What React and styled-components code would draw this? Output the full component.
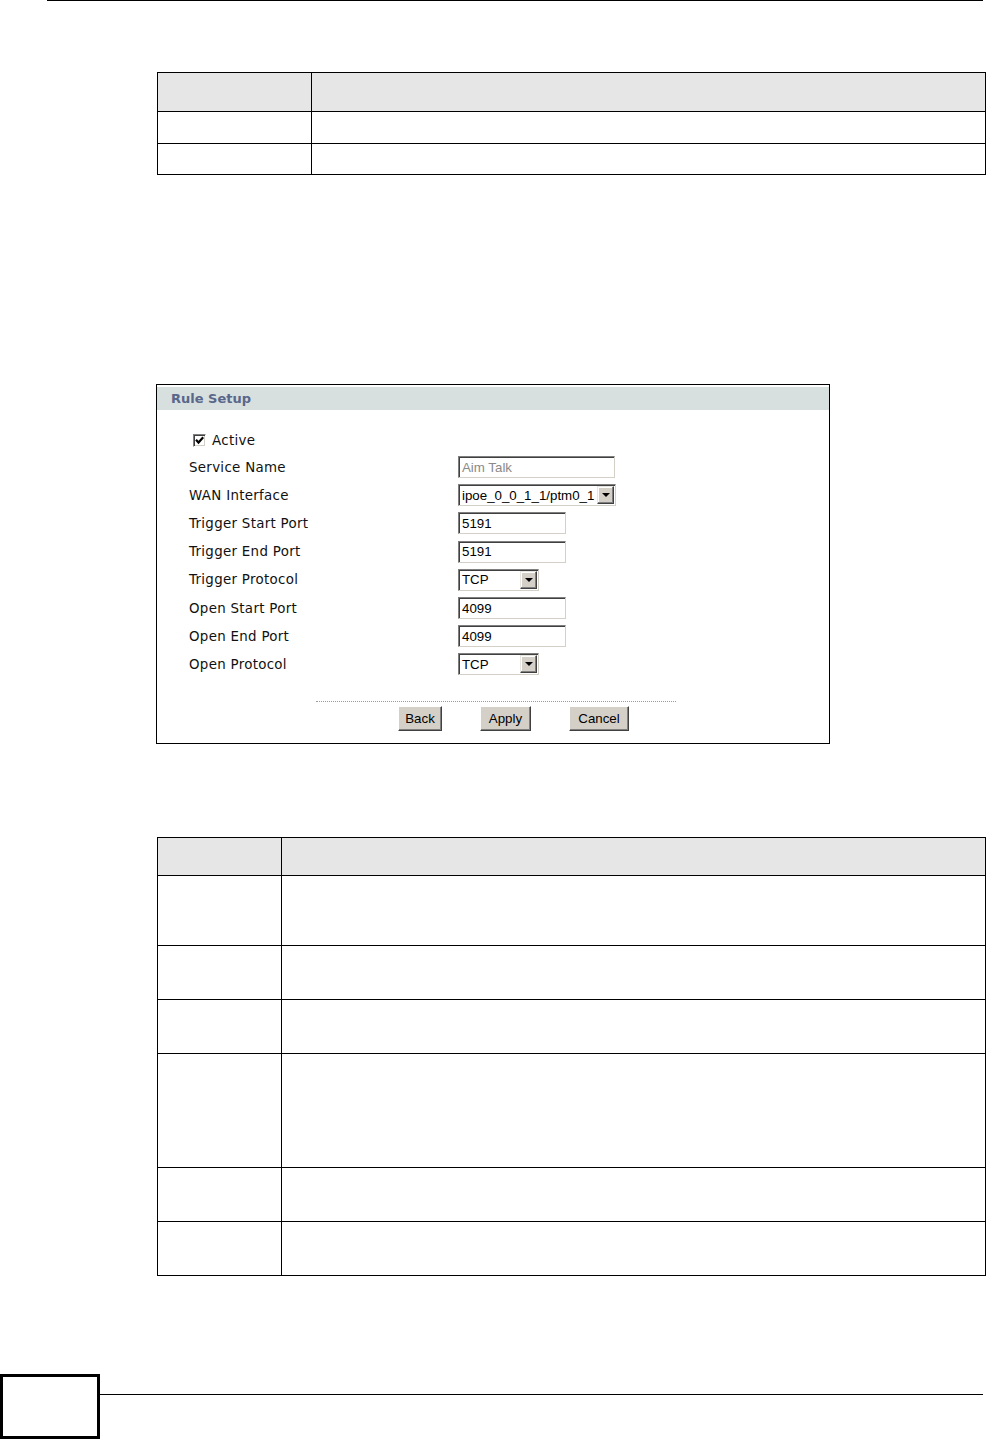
import React from 'react';
import styled, { createGlobalStyle } from 'styled-components';

const GlobalStyle = createGlobalStyle`
  html, body {
    margin: 0;
    padding: 0;
    background: #fff;
  }
  body {
    font-family: "DejaVu Sans", Verdana, sans-serif;
    color: #000;
  }
`;

const Page = styled.div`
  width: 986px;
  height: 1440px;
  display: flex;
  flex-direction: column;
  overflow: hidden;
`;

const TopRule = styled.div`
  margin-left: 47px;
  width: 936px;
  height: 1px;
  background: #000;
`;

const Table = styled.div`
  margin-top: ${p => p.$top}px;
  margin-left: 157px;
  width: 829px;
  box-sizing: border-box;
  border: 1px solid #000;
`;

const Row = styled.div`
  display: grid;
  grid-template-columns: ${p => p.$first}px 1fr;
  height: ${p => p.$h}px;
  box-sizing: border-box;
  background: ${p => (p.$head ? '#e6e6e6' : '#fff')};

  & + & {
    border-top: 1px solid #000;
  }
`;

const Cell = styled.div`
  & + & {
    border-left: 1px solid #000;
  }
`;

const Panel = styled.section`
  margin-top: 209px;
  margin-left: 156px;
  width: 674px;
  height: 360px;
  box-sizing: border-box;
  border: 1px solid #000;
  padding-top: 2px;
  display: flex;
  flex-direction: column;
`;

const PanelHead = styled.div`
  height: 23px;
  background: #d8dfdf;
  display: flex;
  align-items: center;
  padding-left: 14px;
  font-family: "DejaVu Sans", Verdana, sans-serif;
  font-weight: bold;
  font-size: 13px;
  color: #58678a;
`;

const Form = styled.div`
  margin-top: 17px;
  padding-left: 32px;
  display: flex;
  flex-direction: column;
`;

const FieldRow = styled.div`
  display: grid;
  grid-template-columns: 269px auto;
  align-items: center;
  height: ${p => p.$h || 28.2}px;
  font-size: 13.4px;
  letter-spacing: 0.3px;
  color: #111;
`;

const CheckWrap = styled.label`
  display: flex;
  align-items: center;
  gap: 6px;
  padding-left: 4px;
`;

const CheckBox = styled.span`
  width: 13px;
  height: 13px;
  box-sizing: border-box;
  border: 1px solid;
  border-color: #808080 #fff #fff #808080;
  box-shadow: inset 1px 1px #404040, inset -1px -1px #d4d0c8;
  background: #fff;
  display: flex;
  align-items: center;
  justify-content: center;
`;

const TextBox = styled.div`
  width: ${p => p.$w}px;
  height: 22px;
  box-sizing: border-box;
  border: 1px solid;
  border-color: #7f7f7f #d4d0c8 #d4d0c8 #7f7f7f;
  box-shadow: inset 1px 1px #404040;
  display: flex;
  align-items: center;
  padding-left: 3px;
  font-family: "Liberation Sans", Arial, sans-serif;
  font-size: 13.3px;
  letter-spacing: 0;
  color: ${p => (p.$muted ? '#8a8a8a' : '#000')};
  white-space: nowrap;
  overflow: hidden;
`;

const SelectBox = styled(TextBox)`
  padding-right: 1px;
  justify-content: space-between;
`;

const ArrowBtn = styled.span`
  width: 17px;
  height: 18px;
  box-sizing: border-box;
  background: #d4d0c8;
  border: 1px solid;
  border-color: #e8e6e0 #404040 #404040 #e8e6e0;
  box-shadow: inset -1px -1px #808080, inset 1px 1px #fff;
  display: flex;
  align-items: center;
  justify-content: center;
  flex-shrink: 0;
`;

const Actions = styled.div`
  margin-top: 22px;
  margin-left: 159px;
  width: 360px;
  border-top: 1px dotted #9a9a9a;
  padding-top: 4px;
  padding-left: 82px;
  box-sizing: border-box;
  display: flex;
  gap: 38px;
`;

const Button = styled.button`
  width: ${p => p.$w}px;
  height: 25px;
  padding: 0;
  background: #d4d0c8;
  border: 1px solid;
  border-color: #fff #404040 #404040 #fff;
  box-shadow: inset -1px -1px #808080;
  font-family: "Liberation Sans", Arial, sans-serif;
  font-size: 13.3px;
  color: #000;
`;

const Footer = styled.div`
  margin-top: 98px;
  display: flex;
  align-items: flex-start;
`;

const PageBox = styled.div`
  width: 100px;
  height: 65px;
  box-sizing: border-box;
  border: 3px solid #000;
`;

const FooterRule = styled.div`
  margin-top: 20px;
  width: 883px;
  height: 1px;
  background: #000;
`;

const Arrow = () => (
  <svg width="8" height="4" viewBox="0 0 8 4">
    <path d="M0 0 H8 L4 4 Z" fill="#000" />
  </svg>
);

const Select = ({ w, value }) => (
  <SelectBox $w={w}>
    <span>{value}</span>
    <ArrowBtn>
      <Arrow />
    </ArrowBtn>
  </SelectBox>
);

const DataTable = ({ top, first, heights }) => (
  <Table $top={top}>
    {heights.map((h, i) => (
      <Row key={i} $h={h} $first={first} $head={i === 0}>
        <Cell />
        <Cell />
      </Row>
    ))}
  </Table>
);

const fields = [
  { label: 'Service Name', kind: 'text', w: 157, value: 'Aim Talk', muted: true },
  { label: 'WAN Interface', kind: 'select', w: 158, value: 'ipoe_0_0_1_1/ptm0_1' },
  { label: 'Trigger Start Port', kind: 'text', w: 108, value: '5191' },
  { label: 'Trigger End Port', kind: 'text', w: 108, value: '5191' },
  { label: 'Trigger Protocol', kind: 'select', w: 81, value: 'TCP' },
  { label: 'Open Start Port', kind: 'text', w: 108, value: '4099' },
  { label: 'Open End Port', kind: 'text', w: 108, value: '4099' },
  { label: 'Open Protocol', kind: 'select', w: 81, value: 'TCP' },
];

export default function App() {
  return (
    <Page>
      <GlobalStyle />
      <TopRule />
      <DataTable top={71} first={153} heights={[38, 32, 31]} />

      <Panel>
        <PanelHead>Rule Setup</PanelHead>
        <Form>
          <FieldRow $h={26}>
            <CheckWrap>
              <CheckBox>
                <svg width="9" height="9" viewBox="0 0 9 9">
                  <path d="M1 3.8 L3.5 6.5 L8.2 1.2" stroke="#000" strokeWidth="2.2" fill="none" />
                </svg>
              </CheckBox>
              Active
            </CheckWrap>
          </FieldRow>
          {fields.map(f => (
            <FieldRow key={f.label}>
              <span>{f.label}</span>
              {f.kind === 'select' ? (
                <Select w={f.w} value={f.value} />
              ) : (
                <TextBox $w={f.w} $muted={f.muted}>{f.value}</TextBox>
              )}
            </FieldRow>
          ))}
        </Form>
        <Actions>
          <Button $w={44}>Back</Button>
          <Button $w={51}>Apply</Button>
          <Button $w={60}>Cancel</Button>
        </Actions>
      </Panel>

      <DataTable top={93} first={123} heights={[37, 70, 54, 54, 114, 54, 54]} />

      <Footer>
        <PageBox />
        <FooterRule />
      </Footer>
    </Page>
  );
}
